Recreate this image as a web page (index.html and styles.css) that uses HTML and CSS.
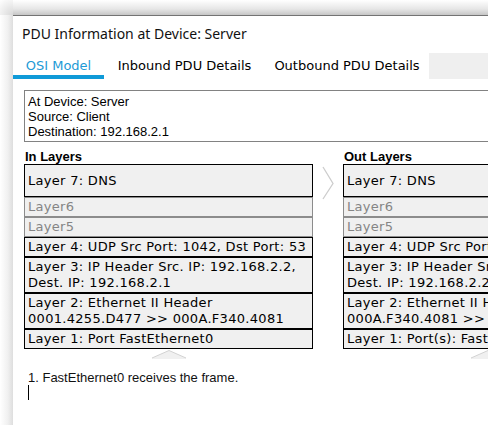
FILE: index.html
```html
<!DOCTYPE html>
<html>
<head>
<meta charset="utf-8">
<link rel="stylesheet" href="styles.css">
</head>
<body>
<div class="screen">
  <div class="window">
    <div class="title">PDU Information at Device: Server</div>
    <div class="tabs">
      <div class="tab tab-osi active">OSI Model</div>
      <div class="tab tab-in">Inbound PDU Details</div>
      <div class="tab tab-out">Outbound PDU Details</div>
      <div class="tab-fill"></div>
    </div>
    <div class="info">
      <div>At Device: Server</div>
      <div>Source: Client</div>
      <div>Destination: 192.168.2.1</div>
    </div>
    <div class="columns">
      <div class="col">
        <div class="col-head">In Layers</div>
        <div class="layer l7">Layer 7: DNS</div>
        <div class="layer off">Layer6</div>
        <div class="layer off">Layer5</div>
        <div class="layer">Layer 4: UDP Src Port: 1042, Dst Port: 53</div>
        <div class="layer">Layer 3: IP Header Src. IP: 192.168.2.2,<br>Dest. IP: 192.168.2.1</div>
        <div class="layer">Layer 2: Ethernet II Header<br>0001.4255.D477 &gt;&gt; 000A.F340.4081</div>
        <div class="layer">Layer 1: Port FastEthernet0</div>
        <div class="up">
          <svg width="34" height="9" viewBox="0 0 34 9"><rect x="0" y="0" width="34" height="9" fill="#f0f0f0"/><polygon points="0,0 34,0 34,8 17,0.5 0,8" fill="#ffffff"/><polyline points="0,8 17,0.5 34,8" fill="none" stroke="#d2d2d2" stroke-width="1"/></svg>
        </div>
      </div>
      <div class="gap">
        <svg class="chev" width="30" height="52" viewBox="0 0 30 52"><polyline points="10,18 20,34.5 10,50" fill="none" stroke="#cdcdcd" stroke-width="1.3"/></svg>
      </div>
      <div class="col">
        <div class="col-head">Out Layers</div>
        <div class="layer l7">Layer 7: DNS</div>
        <div class="layer off">Layer6</div>
        <div class="layer off">Layer5</div>
        <div class="layer">Layer 4: UDP Src Port: 53, Dst Port: 1042</div>
        <div class="layer">Layer 3: IP Header Src. IP: 192.168.2.1,<br>Dest. IP: 192.168.2.2</div>
        <div class="layer">Layer 2: Ethernet II Header<br>000A.F340.4081 &gt;&gt; 0001.4255.D477</div>
        <div class="layer">Layer 1: Port(s): FastEthernet0</div>
        <div class="up">
          <svg width="34" height="9" viewBox="0 0 34 9"><rect x="0" y="0" width="34" height="9" fill="#f0f0f0"/><polygon points="0,0 34,0 34,8 17,0.5 0,8" fill="#ffffff"/><polyline points="0,8 17,0.5 34,8" fill="none" stroke="#d2d2d2" stroke-width="1"/></svg>
        </div>
      </div>
    </div>
    <div class="desc">
      <div>1. FastEthernet0 receives the frame.</div>
      <div class="caret-line"><span class="caret"></span></div>
    </div>
  </div>
</div>
</body>
</html>
```

FILE: styles.css
```css
html, body {
  margin: 0;
  padding: 0;
  background: #ffffff;
}

.screen {
  width: 503px;
  height: 425px;
  overflow: hidden;
  background:
    linear-gradient(to bottom, #ffffff 0%, #e6e6e6 60%, #c6c6c6 100%) no-repeat 13px 0 / 475px 15px,
    linear-gradient(to right, #ffffff 0%, #f0f0f0 60%, #dedede 100%) no-repeat 0 15px / 13px 410px,
    radial-gradient(circle at 100% 100%, #d8d8d8 0%, #ffffff 100%) no-repeat 0 0 / 13px 15px,
    #ffffff;
  padding-top: 15px;
  box-sizing: border-box;
}

.window {
  margin-left: 13px;
  width: 475px;
  height: 410px;
  background: #ffffff;
  border-top: 1px solid #737373;
  box-sizing: border-box;
  overflow: hidden;
  color: #000;
}

.title {
  font-family: "Noto Sans", sans-serif;
  font-size: 14px;
  line-height: 20px;
  padding: 8px 0 0 9px;
  white-space: nowrap;
  color: #111;
}

.tabs {
  display: flex;
  margin-top: 9px;
  height: 26px;
}

.tab {
  flex: none;
  box-sizing: border-box;
  height: 26px;
  line-height: 26px;
  text-align: center;
  font-family: "DejaVu Sans", Verdana, sans-serif;
  font-size: 13px;
  white-space: nowrap;
  color: #000;
}

.tab-osi { width: 91px; }
.tab-in { width: 161px; }
.tab-out { width: 164px; }

.tab.active {
  color: #1e9ad6;
  border-bottom: 4px solid #0f9ad8;
  line-height: 22px;
  padding-top: 2px;
}

.tab-fill {
  flex: 1;
  background: #efefef;
}

.info {
  margin: 11px 0 0 11px;
  width: 480px;
  box-sizing: border-box;
  border: 1px solid #828282;
  padding: 3px 3px 2px 3px;
  font-family: "Liberation Sans", Arial, sans-serif;
  font-size: 13px;
  line-height: 15px;
  white-space: nowrap;
}

.columns {
  display: flex;
  margin: 7px 0 0 11px;
}

.col {
  flex: none;
  width: 289px;
  display: flex;
  flex-direction: column;
}

.gap {
  flex: none;
  width: 30px;
}

.chev {
  display: block;
}

.col-head {
  font-family: "Liberation Sans", Arial, sans-serif;
  font-weight: bold;
  font-size: 13px;
  line-height: 15px;
  padding-left: 1px;
  white-space: nowrap;
}

.layer {
  box-sizing: border-box;
  border: 1px solid #000;
  background: #f0f0f0;
  padding: 1px 3px;
  font-family: "DejaVu Sans", Verdana, sans-serif;
  font-size: 13px;
  letter-spacing: 0.3px;
  line-height: 16px;
  white-space: nowrap;
  color: #000;
  overflow: hidden;
}

.layer.l7 {
  height: 33px;
  display: flex;
  align-items: center;
}

.layer.off {
  border-color: #8c8c8c;
  color: #858585;
}

.up {
  display: flex;
  justify-content: center;
  padding-top: 1px;
  height: 9px;
}

.up svg {
  display: block;
}

.desc {
  margin-top: 11px;
  padding-left: 15px;
  font-family: "Liberation Sans", Arial, sans-serif;
  font-size: 13px;
  line-height: 15px;
  color: #111;
}

.caret-line {
  height: 15px;
}

.caret {
  display: block;
  width: 1px;
  height: 15px;
  background: #000;
}
```
